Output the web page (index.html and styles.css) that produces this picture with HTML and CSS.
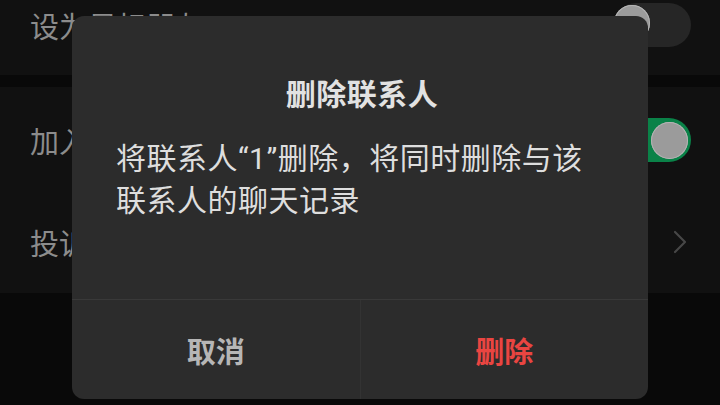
FILE: index.html
```html
<!DOCTYPE html>
<html lang="zh-CN">
<head>
<meta charset="utf-8">
<title>删除联系人</title>
<link rel="stylesheet" href="styles.css">
</head>
<body>
<div class="screen">
  <div class="list">
    <div class="row row-first">
      <span class="label">设为星标朋友</span>
      <span class="switch switch-off"><span class="knob"></span></span>
    </div>
    <div class="group">
      <div class="row">
        <span class="label">加入黑名单</span>
        <span class="switch switch-on"><span class="knob"></span></span>
      </div>
      <div class="row">
        <span class="label">投诉</span>
        <svg class="chevron" width="14" height="24" viewBox="0 0 14 24"><path d="M2 2 L12 12 L2 22" fill="none" stroke="#474747" stroke-width="2.2" stroke-linecap="round" stroke-linejoin="round"/></svg>
      </div>
    </div>
  </div>

  <div class="dialog">
    <div class="dialog-content">
      <div class="dialog-title">删除联系人</div>
      <div class="dialog-body">将联系人“1”删除，将同时删除与该<br>联系人的聊天记录</div>
    </div>
    <div class="dialog-footer">
      <div class="btn btn-cancel">取消</div>
      <div class="btn btn-delete">删除</div>
    </div>
  </div>
</div>
</body>
</html>
```

FILE: styles.css
```css
html, body {
  margin: 0;
  padding: 0;
  background: #090909;
}
body {
  width: 720px;
  height: 405px;
  overflow: hidden;
  font-family: "Noto Sans CJK SC", "Noto Sans", sans-serif;
}
.screen {
  position: relative;
  width: 720px;
  height: 405px;
  overflow: hidden;
  background: #090909;
}
.list {
  margin-top: -25px;
  display: flex;
  flex-direction: column;
}
.row {
  height: 102px;
  display: flex;
  align-items: center;
  justify-content: space-between;
  padding: 0 29px 0 30px;
  background: #111111;
}
.row-first {
  height: 100px;
}
.group {
  margin-top: 12px;
  padding-top: 2px;
  background: #111111;
  display: flex;
  flex-direction: column;
}
.label {
  font-size: 29px;
  color: #8c8c8c;
  line-height: 40px;
}
.switch {
  width: 77px;
  height: 44px;
  border-radius: 22px;
  display: flex;
  align-items: center;
  padding: 0 4px;
  box-sizing: border-box;
}
.switch-off {
  background: #262626;
  justify-content: flex-start;
  padding-left: 0;
}
.switch-on {
  background: #0a8248;
  justify-content: flex-end;
  padding-right: 3px;
}
.knob {
  width: 37px;
  height: 37px;
  border-radius: 50%;
  background: #9b9b9b;
  box-shadow: 0 0 0 1px #b4b4b4 inset;
}
.switch-off .knob {
  width: 36px;
  height: 36px;
  margin-top: -4px;
}
.chevron {
  margin-right: 4px;
}

.dialog {
  position: absolute;
  left: 72px;
  top: 16px;
  width: 576px;
  height: 383px;
  background: #2c2c2c;
  border-radius: 12px;
  display: flex;
  flex-direction: column;
  overflow: hidden;
}
.dialog-content {
  height: 283px;
  box-sizing: border-box;
  padding: 56px 40px 0 44px;
}
.dialog-title {
  font-size: 30px;
  line-height: 40px;
  font-weight: 700;
  color: #e2e2e2;
  text-align: center;
  letter-spacing: 0.5px;
}
.dialog-body {
  margin-top: 26px;
  font-family: "Roboto", "Noto Sans CJK SC", sans-serif;
  font-size: 30px;
  line-height: 42px;
  letter-spacing: 0.5px;
  color: #dedede;
}
.dialog-footer {
  flex: 1;
  display: flex;
  border-top: 1px solid #393939;
}
.btn {
  flex: 1;
  display: flex;
  align-items: center;
  justify-content: center;
  font-size: 29px;
  font-weight: 700;
}
.btn-cancel {
  color: #b6b6b6;
}
.btn-delete {
  color: #ea4541;
  border-left: 1px solid #333333;
}
```
